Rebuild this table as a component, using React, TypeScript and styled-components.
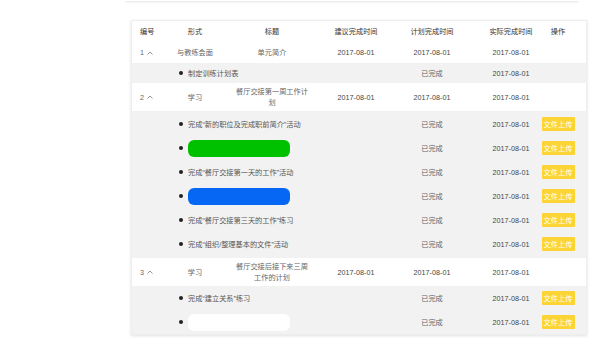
import React from "react"
import styled, { createGlobalStyle } from "styled-components"

const GlobalStyle = createGlobalStyle`
  html, body {
    margin: 0;
    padding: 0;
    background: #fff;
  }
  body {
    font-family: "Liberation Sans", "Noto Sans CJK SC", sans-serif;
    font-size: 7.2px;
    color: #666;
  }
`

type SubItem = {
  text?: string
  bar?: string
  status: string
  date: string
  upload?: boolean
}

type Task = {
  no: number
  kind: string
  title: string
  suggested: string
  planned: string
  actual: string
  height: number
  pad: number
  items: SubItem[]
}

const d = "2017-08-01"

const tasks: Task[] = [
  {
    no: 1,
    kind: "与教练会面",
    title: "单元简介",
    suggested: d,
    planned: d,
    actual: d,
    height: 21,
    pad: 0,
    items: [{ text: "制定训练计划表", status: "已完成", date: d }],
  },
  {
    no: 2,
    kind: "学习",
    title: "餐厅交接第一周工作计划",
    suggested: d,
    planned: d,
    actual: d,
    height: 28,
    pad: 1,
    items: [
      { text: "完成“新的职位及完成职前简介”活动", status: "已完成", date: d, upload: true },
      { bar: "#00c100", status: "已完成", date: d, upload: true },
      { text: "完成“餐厅交接第一天的工作”活动", status: "已完成", date: d, upload: true },
      { bar: "#0767f5", status: "已完成", date: d, upload: true },
      { text: "完成“餐厅交接第三天的工作”练习", status: "已完成", date: d, upload: true },
      { text: "完成“组织/整理基本的文件”活动", status: "已完成", date: d, upload: true },
    ],
  },
  {
    no: 3,
    kind: "学习",
    title: "餐厅交接后接下来三周工作的计划",
    suggested: d,
    planned: d,
    actual: d,
    height: 28,
    pad: 0,
    items: [
      { text: "完成“建立关系”练习", status: "已完成", date: d, upload: true },
      { bar: "#ffffff", status: "已完成", date: d, upload: true },
    ],
  },
]

const Caret = () => (
  <svg width="6" height="4" viewBox="0 0 6 4">
    <polyline points="0.5,3.5 3,1 5.5,3.5" fill="none" stroke="#777" strokeWidth="0.8" />
  </svg>
)

export default function App() {
  return (
    <>
      <GlobalStyle />
      <Page>
        <TopCard />
        <Card>
          <Row $h={21}>
            <NoCell $head>编号</NoCell>
            <Cell $head>形式</Cell>
            <Cell $head $title>标题</Cell>
            <Cell $head>建议完成时间</Cell>
            <Cell $head>计划完成时间</Cell>
            <Cell $head $shift>实际完成时间</Cell>
            <Cell $head>操作</Cell>
          </Row>
          {tasks.map((t) => (
            <React.Fragment key={t.no}>
              <Row $h={t.height}>
                <NoCell>
                  {t.no}
                  <Caret />
                </NoCell>
                <Cell>{t.kind}</Cell>
                <Cell $title>{t.title}</Cell>
                <Cell $dark>{t.suggested}</Cell>
                <Cell $dark>{t.planned}</Cell>
                <Cell $dark $shift>{t.actual}</Cell>
                <Cell />
              </Row>
              <SubGroup $pad={t.pad}>
                {t.items.map((it, i) => (
                  <Row key={i} $h={it.upload ? 24 : 20} $sub>
                    <ItemCell>
                      <Dot />
                      {it.bar ? <Bar $color={it.bar} /> : <span>{it.text}</span>}
                    </ItemCell>
                    <Cell>{it.status}</Cell>
                    <Cell $dark $shift>{it.date}</Cell>
                    <Cell>{it.upload && <Upload>文件上传</Upload>}</Cell>
                  </Row>
                ))}
              </SubGroup>
            </React.Fragment>
          ))}
        </Card>
      </Page>
    </>
  )
}

const Page = styled.div`
  width: 600px;
  height: 340px;
  overflow: hidden;
`

const TopCard = styled.div`
  margin-left: 125px;
  width: 453px;
  height: 1px;
  border-bottom: 1px solid #ececec;
  box-shadow: 0 1px 2px rgba(0, 0, 0, 0.05);
`

const Card = styled.div`
  margin: 18px 0 0 131px;
  width: 454px;
  background: #fff;
  border: 1px solid #eeeeee;
  box-shadow: 0 1px 3px rgba(0, 0, 0, 0.12);
`

const Row = styled.div<{ $h: number; $sub?: boolean }>`
  display: grid;
  grid-template-columns: 31px 64px 90px 78px 74px 72px 34px;
  padding-right: 11px;
  height: ${(p) => p.$h}px;
  align-items: center;
  background: ${(p) => (p.$sub ? "#f2f2f2" : "#fff")};
`

const SubGroup = styled.div<{ $pad: number }>`
  background: #f2f2f2;
  padding: ${(p) => p.$pad}px 0 ${(p) => p.$pad * 2}px;
`

const Cell = styled.div<{ $head?: boolean; $dark?: boolean; $shift?: boolean; $title?: boolean }>`
  display: flex;
  justify-content: center;
  text-align: center;
  line-height: 11px;
  padding: 0 ${(p) => (p.$title ? 6 : 0)}px 0 ${(p) => (p.$shift ? 12 : p.$title ? 6 : 0)}px;
  color: ${(p) => (p.$head ? "#333" : p.$dark ? "#444" : "#666")};
`

const NoCell = styled.div<{ $head?: boolean }>`
  padding-left: 8px;
  display: flex;
  align-items: center;
  gap: 3px;
  line-height: 11px;
  color: ${(p) => (p.$head ? "#333" : "#666")};
`

const ItemCell = styled.div`
  grid-column: 1 / 5;
  padding-left: 47px;
  display: flex;
  align-items: center;
  gap: 5px;
  color: #555;
  line-height: 11px;
`

const Dot = styled.span`
  width: 4px;
  height: 4px;
  border-radius: 50%;
  background: #222;
  flex: none;
`

const Bar = styled.span<{ $color: string }>`
  width: 102px;
  height: 17px;
  border-radius: 6px;
  background: ${(p) => p.$color};
`

const Upload = styled.span`
  display: inline-flex;
  align-items: center;
  justify-content: center;
  width: 33px;
  height: 14px;
  border-radius: 1px;
  background: #fcd534;
  color: #fff;
  font-size: 7.2px;
`
